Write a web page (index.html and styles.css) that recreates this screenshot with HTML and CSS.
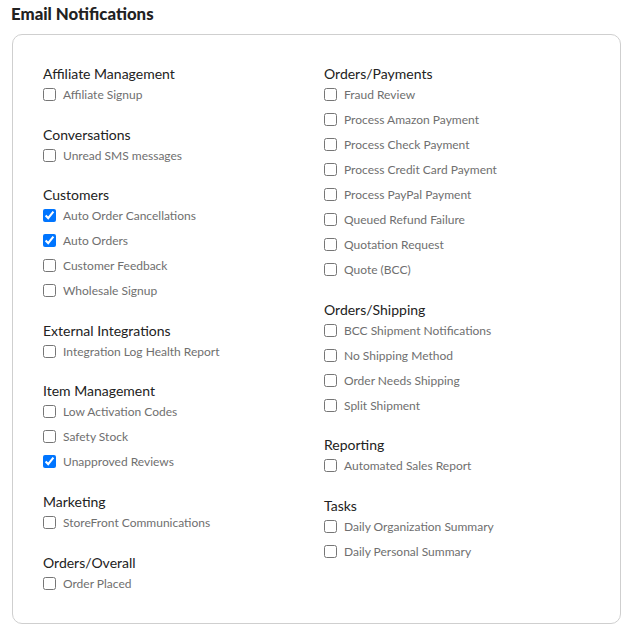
FILE: index.html
```html
<!DOCTYPE html>
<html lang="en">
<head>
    <meta charset="UTF-8">
    <meta name="viewport" content="width=device-width, initial-scale=1.0">
    <title>Email Notifications</title>
    <link rel="stylesheet" href="styles.css">
</head>
<body>
    <h2 class="page-title">Email Notifications</h2>
    <div class="card">
        <div class="columns">
            <div class="column">
                <div class="group">
                    <div class="group-title">Affiliate Management</div>
                    <label class="option"><input type="checkbox"> Affiliate Signup</label>
                </div>
                <div class="group">
                    <div class="group-title">Conversations</div>
                    <label class="option"><input type="checkbox"> Unread SMS messages</label>
                </div>
                <div class="group">
                    <div class="group-title">Customers</div>
                    <label class="option"><input type="checkbox" checked> Auto Order Cancellations</label>
                    <label class="option"><input type="checkbox" checked> Auto Orders</label>
                    <label class="option"><input type="checkbox"> Customer Feedback</label>
                    <label class="option"><input type="checkbox"> Wholesale Signup</label>
                </div>
                <div class="group">
                    <div class="group-title">External Integrations</div>
                    <label class="option"><input type="checkbox"> Integration Log Health Report</label>
                </div>
                <div class="group">
                    <div class="group-title">Item Management</div>
                    <label class="option"><input type="checkbox"> Low Activation Codes</label>
                    <label class="option"><input type="checkbox"> Safety Stock</label>
                    <label class="option"><input type="checkbox" checked> Unapproved Reviews</label>
                </div>
                <div class="group">
                    <div class="group-title">Marketing</div>
                    <label class="option"><input type="checkbox"> StoreFront Communications</label>
                </div>
                <div class="group">
                    <div class="group-title">Orders/Overall</div>
                    <label class="option"><input type="checkbox"> Order Placed</label>
                </div>
            </div>
            <div class="column">
                <div class="group">
                    <div class="group-title">Orders/Payments</div>
                    <label class="option"><input type="checkbox"> Fraud Review</label>
                    <label class="option"><input type="checkbox"> Process Amazon Payment</label>
                    <label class="option"><input type="checkbox"> Process Check Payment</label>
                    <label class="option"><input type="checkbox"> Process Credit Card Payment</label>
                    <label class="option"><input type="checkbox"> Process PayPal Payment</label>
                    <label class="option"><input type="checkbox"> Queued Refund Failure</label>
                    <label class="option"><input type="checkbox"> Quotation Request</label>
                    <label class="option"><input type="checkbox"> Quote (BCC)</label>
                </div>
                <div class="group">
                    <div class="group-title">Orders/Shipping</div>
                    <label class="option"><input type="checkbox"> BCC Shipment Notifications</label>
                    <label class="option"><input type="checkbox"> No Shipping Method</label>
                    <label class="option"><input type="checkbox"> Order Needs Shipping</label>
                    <label class="option"><input type="checkbox"> Split Shipment</label>
                </div>
                <div class="group">
                    <div class="group-title">Reporting</div>
                    <label class="option"><input type="checkbox"> Automated Sales Report</label>
                </div>
                <div class="group">
                    <div class="group-title">Tasks</div>
                    <label class="option"><input type="checkbox"> Daily Organization Summary</label>
                    <label class="option"><input type="checkbox"> Daily Personal Summary</label>
                </div>
            </div>
        </div>
    </div>
</body>
</html>
```

FILE: styles.css
```css
body {
    font-family: 'Lato', 'Open Sans', sans-serif;
    background: #fff;
    color: #212529;
    margin: 0;
    padding: 4px 16px 0 11px;
}
.page-title {
    font-size: 16.8px;
    font-weight: 900;
    color: #222;
    margin: 0 0 10px 0;
    line-height: 20px;
}
.card {
    margin-left: 1px;
    border: 1px solid #cfcfcf;
    border-radius: 10px;
    padding: 30px 15px 27px 30px;
}
.columns {
    display: grid;
    grid-template-columns: 281px 1fr;
}
.group {
    display: flex;
    flex-direction: column;
    margin-bottom: 18.6px;
}
.group:last-child {
    margin-bottom: 0;
}
.group-title {
    font-size: 14px;
    line-height: 17px;
    color: #222;
}
.option {
    display: flex;
    align-items: center;
    height: 25px;
    font-size: 12px;
    color: #6f6f6f;
    cursor: pointer;
}
.option input {
    margin: 0 7px 0 0;
    width: 13px;
    height: 13px;
}
```
